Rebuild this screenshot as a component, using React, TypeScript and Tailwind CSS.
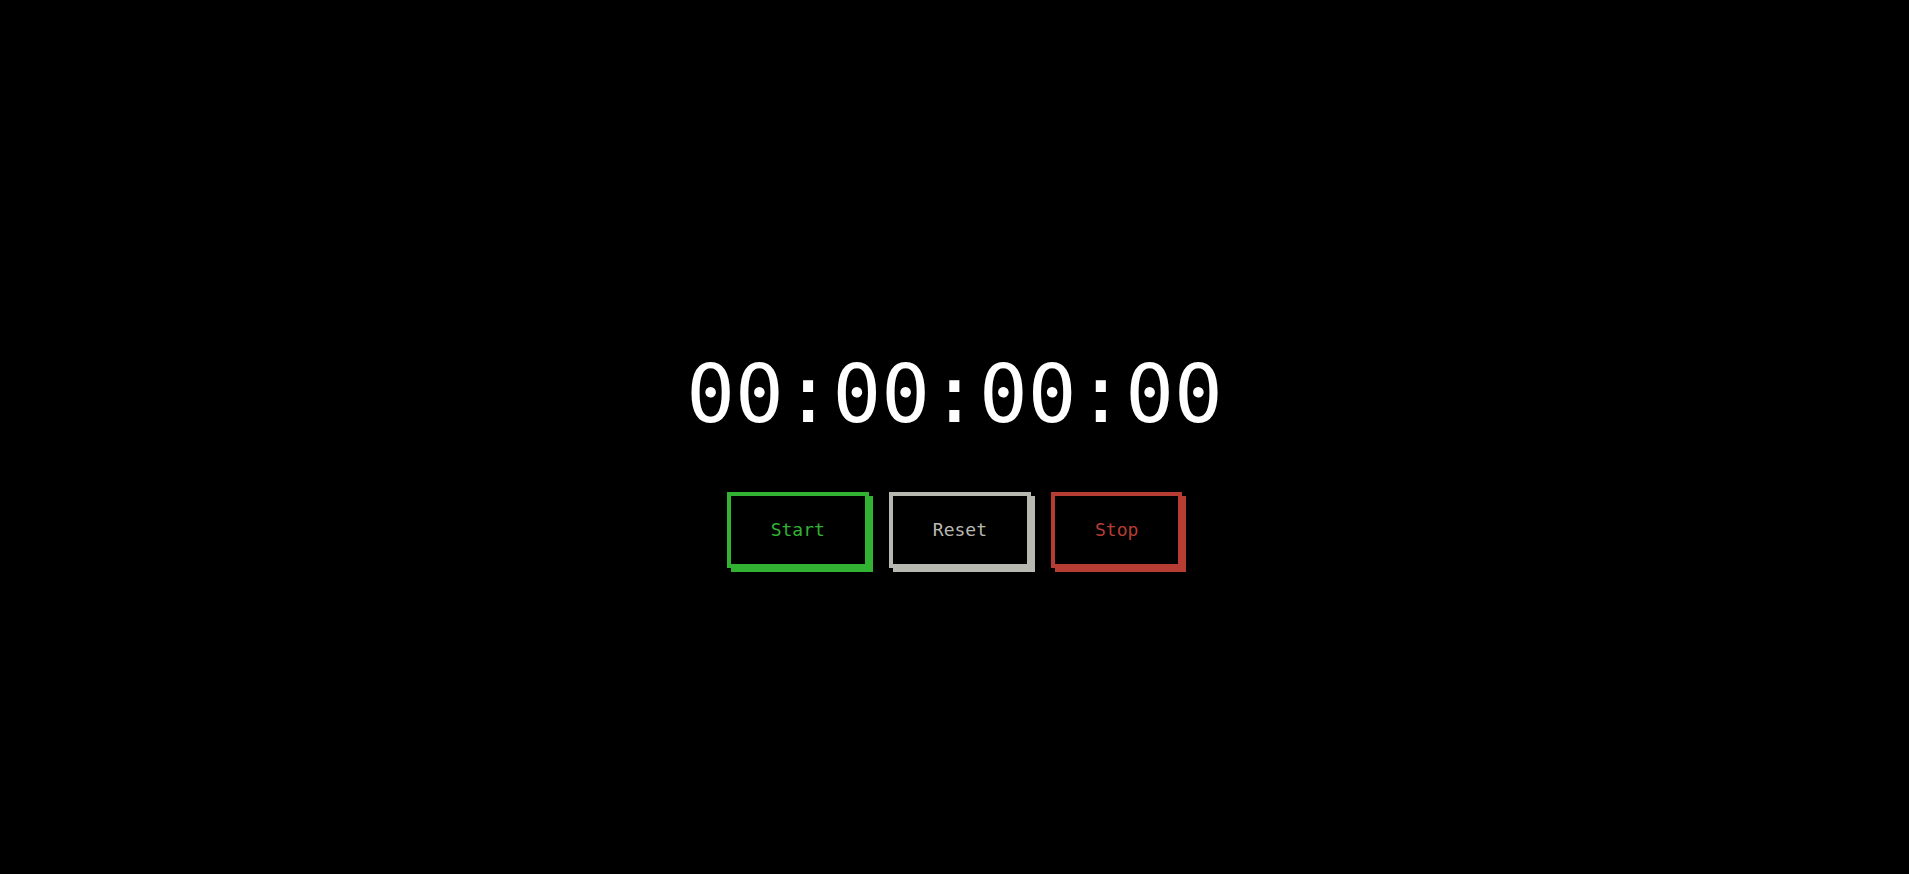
import { useState } from 'react';

const mono = { fontFamily: '"DejaVu Sans Mono", "Liberation Mono", monospace' };

export default function App() {
  const [running, setRunning] = useState(false);

  return (
    <div
      className="h-screen w-full bg-black flex flex-col items-center justify-center pt-[48px]"
      style={mono}
    >
      <div className="text-white text-[81px] leading-none">00:00:00:00</div>

      <div className="flex gap-5 mt-[57px]">
        {/* Start */}
        <button
          onClick={() => setRunning(true)}
          className="border-4 border-[#31b233] text-[#31b233] text-[18px] leading-7 px-10 py-5 shadow-[4px_4px_0_#31b233]"
        >
          Start
        </button>

        {/* Reset */}
        <button
          onClick={() => setRunning(false)}
          className="border-4 border-[#b7b8b0] text-[#b7b8b0] text-[18px] leading-7 px-10 py-5 shadow-[4px_4px_0_#b7b8b0]"
        >
          Reset
        </button>

        {/* Stop */}
        <button
          onClick={() => setRunning(!running && false)}
          className="border-4 border-[#b53d34] text-[#b53d34] text-[18px] leading-7 px-10 py-5 shadow-[4px_4px_0_#b53d34]"
        >
          Stop
        </button>
      </div>
    </div>
  );
}
